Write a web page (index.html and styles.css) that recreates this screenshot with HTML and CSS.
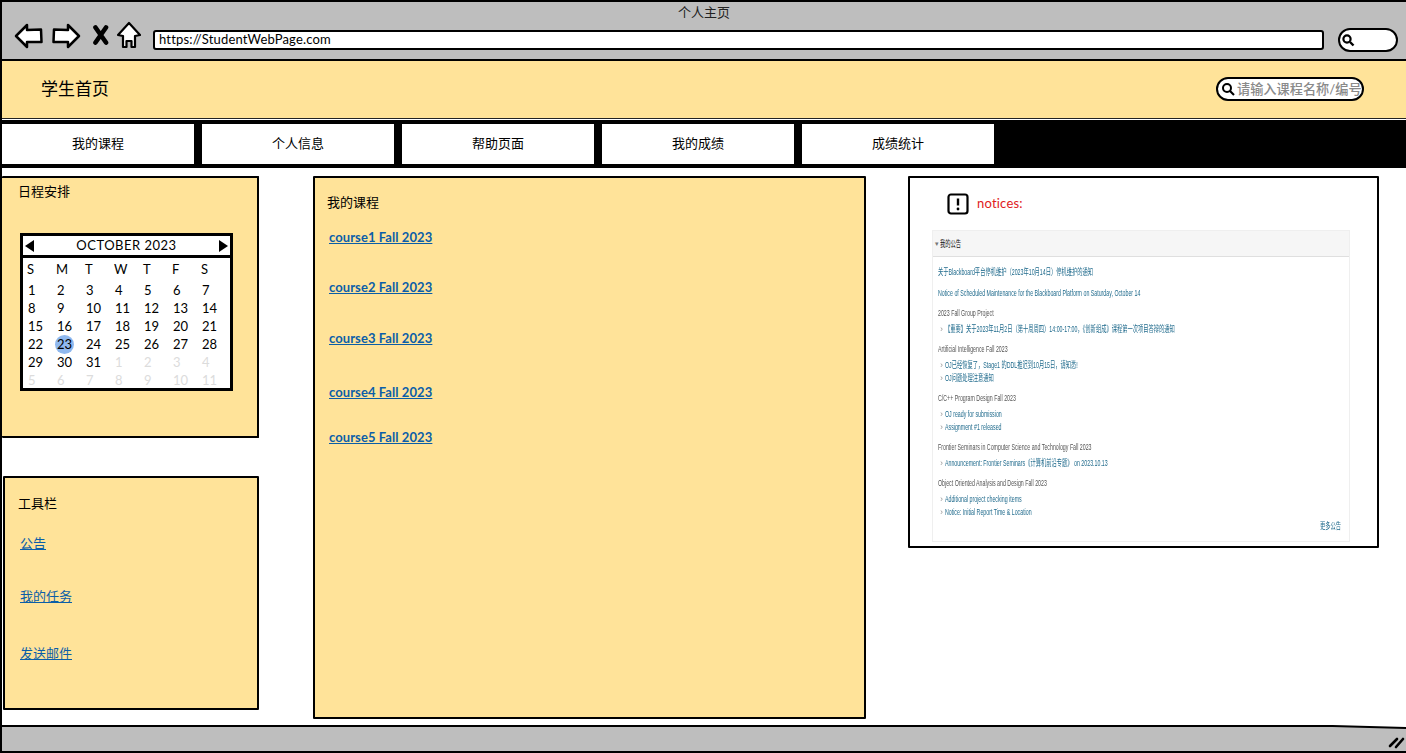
FILE: index.html
```html
<!DOCTYPE html>
<html lang="zh">
<head>
<meta charset="utf-8">
<title>个人主页</title>
<link rel="stylesheet" href="styles.css">
</head>
<body>
<div class="window">
  <div class="chrome">
    <div class="chrome-title">个人主页</div>
    <div class="toolbar">
      <svg class="icon-back" width="30" height="28" viewBox="0 0 30 28"><path d="M2 14 L13 3 L13 8 L27 7.5 L27.5 20 L13 20 L13 25 Z" fill="#fff" stroke="#000" stroke-width="2.5" stroke-linejoin="round"/></svg>
      <svg class="icon-forward" width="30" height="28" viewBox="0 0 30 28"><path d="M28 14 L17 3 L17 8 L3 7.5 L2.5 20 L17 20 L17 25 Z" fill="#fff" stroke="#000" stroke-width="2.5" stroke-linejoin="round"/></svg>
      <svg class="icon-close" width="16" height="20" viewBox="0 0 16 20"><path d="M2.5 2.5 L13 17.5 M13 2.5 L2.5 17.5" stroke="#000" stroke-width="4.6" stroke-linecap="round" fill="none"/></svg>
      <svg class="icon-home" width="24" height="28" viewBox="0 0 24 28"><path d="M12 2 L23 14 L18 15 L18 26 L14.500 26 L14.500 20 L9.500 20 L9.500 26 L6 26 L6 15 L1 14 Z" fill="#fff" stroke="#000" stroke-width="2.200" stroke-linejoin="round"/></svg>
      <div class="url">https://StudentWebPage.com</div>
      <div class="browser-search">
        <svg width="14" height="14" viewBox="0 0 14 14"><circle cx="6" cy="6" r="3.600" fill="none" stroke="#000" stroke-width="2.200"/><path d="M9 9 L12.500 12.500" stroke="#000" stroke-width="2.400"/></svg>
      </div>
    </div>
  </div>

  <header class="site-header">
    <div class="site-title">学生首页</div>
    <div class="site-search">
      <svg width="14" height="14" viewBox="0 0 14 14"><circle cx="6" cy="6" r="4" fill="none" stroke="#000" stroke-width="2"/><path d="M9 9 L13 13" stroke="#000" stroke-width="2.200"/></svg>
      <span class="site-search-text">请输入课程名称/编号</span>
    </div>
  </header>

  <nav class="tabs">
    <a class="tab">我的课程</a>
    <a class="tab">个人信息</a>
    <a class="tab">帮助页面</a>
    <a class="tab">我的成绩</a>
    <a class="tab">成绩统计</a>
  </nav>

  <main class="content">
    <div class="col-left">
      <section class="panel panel-schedule">
        <div class="panel-title">日程安排</div>
        <div class="calendar">
          <div class="cal-head">
            <span class="cal-arrow cal-arrow-left"></span>
            <span class="cal-month">OCTOBER 2023</span>
            <span class="cal-arrow cal-arrow-right"></span>
          </div>
          <div class="cal-grid">
            <span class="dow">S</span><span class="dow">M</span><span class="dow">T</span><span class="dow">W</span><span class="dow">T</span><span class="dow">F</span><span class="dow">S</span>
            <span>1</span><span>2</span><span>3</span><span>4</span><span>5</span><span>6</span><span>7</span>
            <span>8</span><span>9</span><span>10</span><span>11</span><span>12</span><span>13</span><span>14</span>
            <span>15</span><span>16</span><span>17</span><span>18</span><span>19</span><span>20</span><span>21</span>
            <span>22</span><span class="today">23</span><span>24</span><span>25</span><span>26</span><span>27</span><span>28</span>
            <span>29</span><span>30</span><span>31</span><span class="off">1</span><span class="off">2</span><span class="off">3</span><span class="off">4</span>
            <span class="off">5</span><span class="off">6</span><span class="off">7</span><span class="off">8</span><span class="off">9</span><span class="off">10</span><span class="off">11</span>
          </div>
        </div>
      </section>
      <section class="panel panel-tools">
        <div class="panel-title">工具栏</div>
        <a class="tool-link tool-1">公告</a>
        <a class="tool-link tool-2">我的任务</a>
        <a class="tool-link tool-3">发送邮件</a>
      </section>
    </div>

    <section class="panel panel-courses">
      <div class="panel-title">我的课程</div>
      <a class="course course-1">course1 Fall 2023</a>
      <a class="course course-2">course2 Fall 2023</a>
      <a class="course course-3">course3 Fall 2023</a>
      <a class="course course-4">course4 Fall 2023</a>
      <a class="course course-5">course5 Fall 2023</a>
    </section>

    <section class="notices">
      <div class="notices-head">
        <svg width="22" height="22" viewBox="0 0 22 22"><rect x="1.500" y="1.500" width="19" height="19" rx="2.500" fill="#fff" stroke="#000" stroke-width="2.200"/><path d="M11 5.500 V12.500" stroke="#000" stroke-width="2.400"/><circle cx="11" cy="16" r="1.400" fill="#000"/></svg>
        <span class="notices-label">notices:</span>
      </div>
      <div class="board">
        <div class="board-head"><span class="board-tri">▾</span><span class="squeeze">我的公告</span></div>
        <div class="board-body">
          <div class="n-row n-first n-link-top"><span class="squeeze">关于Blackboard平台停机维护（2023年10月14日）停机维护的通知</span></div>
          <div class="n-row n-top"><span class="squeeze">Notice of Scheduled Maintenance for the Blackboard Platform on Saturday, October 14</span></div>
          <div class="n-row n-course"><span class="squeeze">2023 Fall Group Project</span></div>
          <div class="n-row n-item"><span class="squeeze">【重要】关于2023年11月2日（第十周周四）14:00-17:00，《创新组成》课程第一次项目答辩的通知</span></div>
          <div class="n-row n-course"><span class="squeeze">Artificial Intelligence Fall 2023</span></div>
          <div class="n-row n-item"><span class="squeeze">OJ已经恢复了，Stage1 的DDL推迟到10月15日，请知悉!</span></div>
          <div class="n-row n-item n-next"><span class="squeeze">OJ问题处理注意通知</span></div>
          <div class="n-row n-course"><span class="squeeze">C/C++ Program Design Fall 2023</span></div>
          <div class="n-row n-item"><span class="squeeze">OJ ready for submission</span></div>
          <div class="n-row n-item n-next"><span class="squeeze">Assignment #1 released</span></div>
          <div class="n-row n-course"><span class="squeeze">Frontier Seminars in Computer Science and Technology Fall 2023</span></div>
          <div class="n-row n-item"><span class="squeeze">Announcement: Frontier Seminars《计算机前沿专题》 on 2023.10.13</span></div>
          <div class="n-row n-course"><span class="squeeze">Object Oriented Analysis and Design Fall 2023</span></div>
          <div class="n-row n-item"><span class="squeeze">Additional project checking items</span></div>
          <div class="n-row n-item n-next"><span class="squeeze">Notice: Initial Report Time &amp; Location</span></div>
          <div class="n-more"><span class="squeeze-right">更多公告</span></div>
        </div>
      </div>
    </section>
  </main>

  <footer class="statusbar">
    <svg class="status-wedge" width="110" height="5" viewBox="0 0 110 5"><path d="M0 0 H110 V3 Z" fill="#fff"/><path d="M0 0 L110 3" stroke="#000" stroke-width="2" fill="none"/></svg>
    <svg class="grip" width="17" height="14" viewBox="0 0 17 14"><path d="M2 11 L9 4 M8 12 L15 4" stroke="#000" stroke-width="2.600" stroke-linecap="round" fill="none"/></svg>
  </footer>
</div>
</body>
</html>
```

FILE: styles.css
```css
* { box-sizing: border-box; }

html, body {
  margin: 0;
  padding: 0;
  background: #fff;
}

body {
  font-family: "Lato", "Noto Sans CJK SC", sans-serif;
  color: #000;
  font-size: 13px;
}

.window {
  width: 1406px;
  height: 753px;
  overflow: hidden;
  display: flex;
  flex-direction: column;
  border-left: 2px solid #000;
}

/* browser chrome */
.chrome {
  height: 61px;
  flex: none;
  background: #bebebe;
  border-top: 2px solid #000;
  border-bottom: 2px solid #000;
}

.chrome-title {
  height: 20px;
  line-height: 20px;
  text-align: center;
  font-size: 13px;
  color: #222;
}

.toolbar {
  height: 35px;
  display: flex;
  align-items: center;
  padding-left: 12px;
}

.icon-back { margin-top: -8px; }
.icon-forward { margin-left: 7px; margin-top: -8px; }
.icon-close { margin-left: 12px; margin-top: -10px; }
.icon-home { margin-left: 8px; margin-top: -9px; }

.url {
  margin-left: 12px;
  width: 1171px;
  height: 20px;
  background: #fff;
  border: 2.500px solid #000;
  border-radius: 3px;
  line-height: 15px;
  padding-left: 4px;
  font-size: 13px;
  letter-spacing: 0.170px;
  margin-top: 1px;
}

.browser-search {
  margin-left: 14px;
  width: 60px;
  height: 24px;
  background: #fff;
  border: 2.500px solid #000;
  border-radius: 12px;
  display: flex;
  align-items: center;
  padding-left: 1px;
}

/* site header */
.site-header {
  height: 58px;
  flex: none;
  background: #ffe399;
  border-bottom: 1.500px solid #222;
  display: flex;
  align-items: center;
  justify-content: space-between;
  padding: 0 42px 2px 39px;
}

.site-title {
  font-size: 17px;
  margin-top: -2px;
}

.site-search {
  width: 148px;
  height: 24px;
  background: #fff;
  border: 2.500px solid #000;
  border-radius: 12px;
  display: flex;
  align-items: center;
  padding-left: 3px;
  gap: 2px;
  white-space: nowrap;
  overflow: hidden;
}

.site-search-text {
  font-size: 13.200px;
  font-weight: 500;
  color: #8a8a8a;
}

/* tabs */
.tabs {
  margin-top: 1px;
  height: 48px;
  flex: none;
  background: #000;
  display: flex;
  gap: 8px;
  padding: 4px 0;
}

.tab {
  width: 192px;
  background: #fff;
  display: flex;
  align-items: center;
  justify-content: center;
  font-size: 13px;
  padding-bottom: 3px;
}

/* main area */
.content {
  flex: 1;
  display: flex;
  align-items: flex-start;
  padding-top: 8px;
  min-height: 0;
}

.col-left {
  width: 257px;
  flex: none;
  display: flex;
  flex-direction: column;
  gap: 38px;
}

.panel {
  background: #ffe399;
  border: 2px solid #000;
  border-radius: 1px;
}

.panel-title {
  font-size: 13px;
  line-height: 18px;
}

.panel-schedule {
  height: 262px;
  border-left: 0;
  padding: 4px 0 0 16px;
}

.panel-tools {
  height: 234px;
  margin-left: 1px;
  padding: 16px 0 0 13px;
  display: flex;
  flex-direction: column;
  align-items: flex-start;
}

.tool-link {
  font-size: 13px;
  line-height: 18px;
  color: #0b5ea8;
  text-decoration: underline;
  margin-left: 2px;
}

.tool-1 { margin-top: 22px; }
.tool-2 { margin-top: 35px; }
.tool-3 { margin-top: 39px; }

/* calendar */
.calendar {
  width: 213px;
  height: 158px;
  margin: 33px 0 0 2px;
  background: #fff;
  border: 3px solid #000;
}

.cal-head {
  height: 22px;
  border-bottom: 3px solid #000;
  display: flex;
  align-items: center;
  justify-content: space-between;
  padding: 0 2px;
}

.cal-month {
  font-size: 13px;
  letter-spacing: 0.500px;
  margin-top: -1px;
}

.cal-arrow {
  width: 0;
  height: 0;
  border-top: 6px solid transparent;
  border-bottom: 6px solid transparent;
}

.cal-arrow-left { border-right: 9px solid #000; }
.cal-arrow-right { border-left: 9px solid #000; }

.cal-grid {
  display: grid;
  grid-template-columns: repeat(7, 29px);
  grid-template-rows: 21px;
  grid-auto-rows: 18px;
  padding: 2px 0 0 5px;
  font-size: 13px;
  line-height: 18px;
}

.dow { margin-left: -1px; }

.off { color: #dcdcdc; }

.today {
  justify-self: start;
  width: 19px;
  height: 19px;
  margin-left: -2px;
  text-align: center;
  border-radius: 50%;
  background: #8fb8ee;
}

/* courses */
.panel-courses {
  width: 553px;
  height: 543px;
  flex: none;
  margin-left: 54px;
  padding: 15px 0 0 12px;
  display: flex;
  flex-direction: column;
  align-items: flex-start;
}

.course {
  font-size: 13px;
  line-height: 18px;
  font-weight: 700;
  color: #0b5ea8;
  text-decoration: underline;
  letter-spacing: 0.080px;
  margin-left: 2px;
}

.course-1 { margin-top: 17px; }
.course-2 { margin-top: 32px; }
.course-3 { margin-top: 33px; }
.course-4 { margin-top: 36px; }
.course-5 { margin-top: 27px; }

/* notices */
.notices {
  width: 471px;
  height: 372px;
  flex: none;
  margin-left: 42px;
  background: #fff;
  border: 2.500px solid #000;
  border-radius: 1px;
  padding: 0 27px 4px 22px;
  display: flex;
  flex-direction: column;
}

.notices-head {
  height: 52px;
  display: flex;
  align-items: center;
  gap: 8px;
  padding: 0 0 0 15px;
  flex: none;
}

.notices-label {
  color: #e0201c;
  font-size: 13px;
  letter-spacing: 0.200px;
  margin-top: -2px;
}

.board {
  flex: 1;
  border: 1px solid #efefef;
  filter: blur(0.450px);
  font-family: "Liberation Sans", "Noto Sans CJK SC", sans-serif;
  font-size: 9px;
  overflow: hidden;
}

.board-head {
  height: 26px;
  background: #f6f6f6;
  border-bottom: 1px solid #dfdfdf;
  display: flex;
  align-items: center;
  padding-left: 2px;
  color: #111;
  white-space: nowrap;
}

.board-tri {
  color: #777;
  font-size: 7px;
  margin-right: 1px;
}

.squeeze {
  display: inline-block;
  transform: scaleX(0.585);
  transform-origin: left center;
  white-space: nowrap;
}

.squeeze-right {
  display: inline-block;
  transform: scaleX(0.585);
  transform-origin: right center;
  white-space: nowrap;
}

.board-body {
  padding: 9px 8px 0 5px;
}

.n-row {
  height: 13px;
  line-height: 13px;
}

.n-first, .n-top {
  color: #1f6a8c;
}

.n-top { margin-top: 8px; }

.n-course {
  margin-top: 7px;
  color: #555;
}

.n-item {
  margin-top: 3px;
  padding-left: 7px;
  color: #1f6a8c;
  position: relative;
}

.n-item::before {
  content: "›";
  position: absolute;
  left: 2px;
  top: 0;
  color: #999;
}

.n-next { margin-top: 0; }

.n-more {
  margin-top: 1px;
  height: 13px;
  line-height: 13px;
  text-align: right;
  color: #1f6a8c;
}

/* status bar */
.statusbar {
  height: 28px;
  flex: none;
  background: #bebebe;
  border-top: 2px solid #000;
  border-bottom: 2px solid #000;
  position: relative;
}

.status-wedge {
  position: absolute;
  right: 0;
  top: -2px;
}

.grip {
  position: absolute;
  right: 1px;
  bottom: 2px;
}
```
